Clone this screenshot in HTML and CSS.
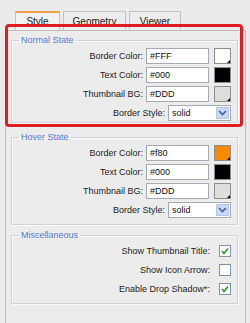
FILE: index.html
```html
<!DOCTYPE html>
<html>
  <head>
  <meta charset="utf-8">
  <title>Thumbnail settings</title>
  <link rel="stylesheet" href="styles.css">
  </head>
  <body>

<div class="tabs">
  <span class="tab tab-active tab-style">Style</span>
  <span class="tab tab-geometry">Geometry</span>
  <span class="tab tab-viewer">Viewer</span>
</div>

<div class="panel">

  <fieldset class="group group-normal">
    <legend>Normal State</legend>
    <div class="row"><label>Border Color:</label><input class="field" type="text" value="#FFF"><span class="swatch sw-white"></span></div>
    <div class="row"><label>Text Color:</label><input class="field" type="text" value="#000"><span class="swatch sw-black"></span></div>
    <div class="row"><label>Thumbnail BG:</label><input class="field" type="text" value="#DDD"><span class="swatch sw-grey"></span></div>
    <div class="row"><label>Border Style:</label><span class="select">solid<span class="select-btn"><svg width="9" height="6" viewBox="0 0 9 6"><path d="M1 1 L4.5 4.5 L8 1" fill="none" stroke="#3f5f9a" stroke-width="1.6"/></svg></span></span></div>
  </fieldset>

  <fieldset class="group group-hover">
    <legend>Hover State</legend>
    <div class="row"><label>Border Color:</label><input class="field" type="text" value="#f80"><span class="swatch sw-orange"></span></div>
    <div class="row"><label>Text Color:</label><input class="field" type="text" value="#000"><span class="swatch sw-black"></span></div>
    <div class="row"><label>Thumbnail BG:</label><input class="field" type="text" value="#DDD"><span class="swatch sw-grey"></span></div>
    <div class="row"><label>Border Style:</label><span class="select">solid<span class="select-btn"><svg width="9" height="6" viewBox="0 0 9 6"><path d="M1 1 L4.5 4.5 L8 1" fill="none" stroke="#3f5f9a" stroke-width="1.6"/></svg></span></span></div>
  </fieldset>

  <fieldset class="group group-misc">
    <legend>Miscellaneous</legend>
    <div class="row"><label>Show Thumbnail Title:</label><span class="check"><svg width="10" height="10" viewBox="0 0 10 10"><path d="M2 5 L4 7.5 L8 2.5" fill="none" stroke="#2f9a2f" stroke-width="1.6"/></svg></span></div>
    <div class="row"><label>Show Icon Arrow:</label><span class="check"></span></div>
    <div class="row"><label>Enable Drop Shadow*:</label><span class="check"><svg width="10" height="10" viewBox="0 0 10 10"><path d="M2 5 L4 7.5 L8 2.5" fill="none" stroke="#2f9a2f" stroke-width="1.6"/></svg></span></div>
  </fieldset>

</div>

<div class="highlight"></div>

  </body>
</html>
```

FILE: styles.css
```css
body {margin:0; background-color:#ebebeb; font:9px "Liberation Sans", Arial, sans-serif; color:#222;}

.tabs {display:flex; gap:3px; padding:11px 0 0 15px; height:19px;}
.tab {display:flex; align-items:center; justify-content:center; box-sizing:border-box; height:19px; border:1px solid #c2c2c2; border-bottom:none; background-color:#ececec; color:#222; font-size:10px;}
.tab-active {border-top:2px solid #f0a048; background-color:#f2f2f2;}
.tab-style {width:45px;}
.tab-geometry {width:63px;}
.tab-viewer {width:52px;}

.panel {margin-left:5px; width:227px; height:288px; padding:4px 7px 0 5px; border:1px solid #bdbdbd; border-bottom:none; background-color:#ececec;}

.group {margin:0; padding:0 6px 0 0; border:1px solid #d2d2d2; box-shadow:inset 1px 1px 0 #fafafa, 1px 1px 0 #fafafa;}
.group legend {margin-left:7px; padding:0 2px; line-height:11px; color:#5279d0;}
.group-hover {margin-top:9px; padding-bottom:5px;}
.group-misc {margin-top:5px; padding-bottom:5px;}

.row {display:flex; align-items:center; height:19px;}
.row label {flex:1; text-align:right; margin-right:3px; white-space:nowrap;}

.field {box-sizing:border-box; width:63px; height:16px; margin:0; padding:0 0 0 3px; border:1px solid #a4abb4; background-color:#fff; font:9px "Liberation Sans", Arial, sans-serif; color:#111; outline:none;}

.select {position:relative; display:flex; align-items:center; box-sizing:border-box; width:63px; height:16px; padding-left:3px; border:1px solid #a4abb4; background-color:#fff; color:#111;}
.select-btn {position:absolute; right:1px; top:1px; bottom:1px; width:13px; display:flex; align-items:center; justify-content:center; background-color:#c9d8f6; border:1px solid #b3c6ee; box-sizing:border-box;}

.swatch {position:relative; box-sizing:border-box; width:17px; height:16px; margin-left:5px; border:1px solid #8d8d8d;}
.swatch:after {content:""; position:absolute; right:0; bottom:0; border-left:3px solid transparent; border-bottom:3px solid #000;}
.sw-white {background-color:#fff;}
.sw-black {background-color:#000;}
.sw-grey {background-color:#dedede;}
.sw-orange {background-color:#f88a00;}

.check {display:flex; align-items:center; justify-content:center; box-sizing:border-box; width:12px; height:12px; margin-left:6px; border:1px solid #7f93ad; background-color:#fff;}

.highlight {position:absolute; left:5px; top:24px; width:232px; height:97px; border:3px solid #e11b22; border-radius:4px;}
```
